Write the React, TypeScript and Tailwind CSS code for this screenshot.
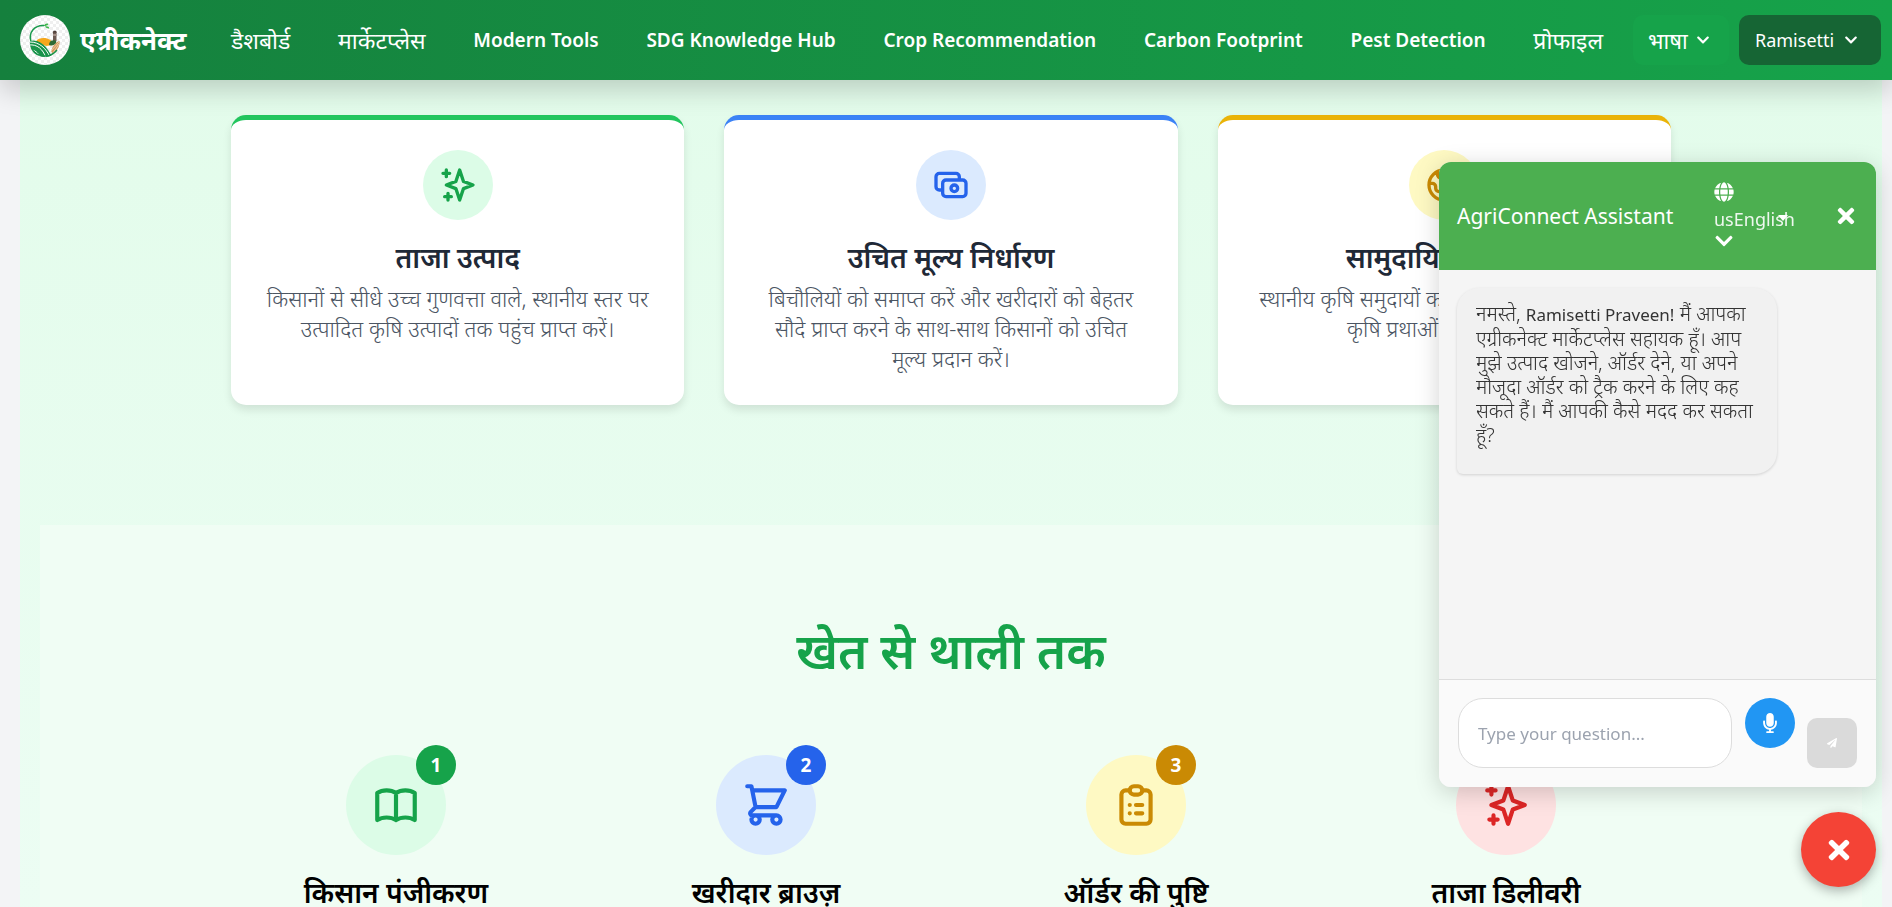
import type { ReactNode } from "react";
import {
  HiOutlineBookOpen,
  HiOutlineCash,
  HiOutlineClipboardList,
  HiOutlineGlobe,
  HiOutlineShoppingCart,
  HiOutlineSparkles,
} from "react-icons/hi";
import { FaChevronDown, FaGlobe, FaMicrophone, FaPaperPlane, FaTimes } from "react-icons/fa";

const navLinks = [
  { label: "डैशबोर्ड", hindi: true },
  { label: "मार्केटप्लेस", hindi: true },
  { label: "Modern Tools", hindi: false },
  { label: "SDG Knowledge Hub", hindi: false },
  { label: "Crop Recommendation", hindi: false },
  { label: "Carbon Footprint", hindi: false },
  { label: "Pest Detection", hindi: false },
  { label: "प्रोफाइल", hindi: true },
];

function Logo() {
  return (
    <svg viewBox="0 0 50 50" className="size-[50px] shrink-0" aria-hidden="true">
      <defs>
        <pattern id="checks" width="6" height="6" patternUnits="userSpaceOnUse">
          <rect width="6" height="6" fill="#ffffff" />
          <rect width="3" height="3" fill="#efefef" />
          <rect x="3" y="3" width="3" height="3" fill="#efefef" />
        </pattern>
        <clipPath id="field">
          <path d="M10 26C17 24 25 28 31 35C34 29 37 26 40 26C41 36 33 42 25 42C16 42 9 36 10 26Z" />
        </clipPath>
      </defs>
      <circle cx="25" cy="25" r="25" fill="url(#checks)" />
      <path d="M11 27C8 17 15 10 24 10.500" fill="none" stroke="#1a9a4c" strokeWidth="1.500" strokeLinecap="round" />
      <path d="M24 11C25 8.500 27 8 28.500 9C27.500 10.500 26 11 24 11ZM25 11.500C27.500 11 29 12 29.500 13.500C27.500 13.500 26 13 25 11.500Z" fill="#3cb54a" />
      <path d="M16 26.500C18 23 23 22.500 27 23.500C31 24.500 33 27 33 30L26 31Z" fill="#f6a71c" />
      <rect x="33" y="17" width="3.500" height="9" fill="#6d5a52" />
      <path d="M32.500 17.500C33 15 36.500 15 37 17.500Z" fill="#4b3a35" />
      <path d="M33 19h3.500v2H33z" fill="#a38f86" />
      <path d="M31 36C33 30 36 27 39.500 26C40 30 38 35 33 39Z" fill="#d99a5b" />
      <path d="M29 30C29 27 31 25 33 25.500C35 24.500 37 26 36 28C34 30.500 31 31 29 30Z" fill="#2f6b35" />
      <g clipPath="url(#field)">
        <path d="M9 25C18 24 26 29 32 42H9Z" fill="#18934a" />
        <path d="M9 30C17 29 23 34 26 43M9 35C14 34 19 38 20 43M10 27C19 27 26 33 30 42" fill="none" stroke="#ffffff" strokeWidth="1" />
        <path d="M33 38L39 29M31 36L39 27" stroke="#f5e3cc" strokeWidth="0.700" />
      </g>
      <path d="M12 34C16 41 29 45 37 35" fill="none" stroke="#18934a" strokeWidth="1.400" />
    </svg>
  );
}

function Navbar() {
  return (
    <header className="sticky top-0 z-20 flex h-20 items-center bg-linear-to-r from-[#15803d] to-[#16a34a] pr-[11px] pl-5 text-white shadow-[0_10px_25px_rgba(0,0,0,0.18)]">
      <a href="#home" className="flex w-[211px] shrink-0 items-center gap-[10px]">
        <Logo />
        <span className="text-[26px] leading-9 font-bold">एग्रीकनेक्ट</span>
      </a>
      <nav className="flex flex-1 items-center justify-between">
        {navLinks.map((link) => (
          <a
            key={link.label}
            href="#section"
            className={link.hindi ? "text-[23px] leading-7 whitespace-nowrap" : "text-[19px] leading-7 font-semibold whitespace-nowrap"}
          >
            {link.label}
          </a>
        ))}
      </nav>
      <button type="button" className="ml-[30px] flex h-[50px] w-24 shrink-0 items-center gap-2 rounded-[10px] bg-[#16a34a] pl-[15px] text-[22px]">
        भाषा
        <FaChevronDown className="size-[14px]" />
      </button>
      <button type="button" className="ml-[10px] flex h-[50px] w-[142px] shrink-0 items-center gap-[10px] rounded-[10px] bg-[#166534] pl-4 text-[18px]">
        Ramisetti
        <FaChevronDown className="size-[14px]" />
      </button>
    </header>
  );
}

const features = [
  {
    title: "ताजा उत्पाद",
    body: "किसानों से सीधे उच्च गुणवत्ता वाले, स्थानीय स्तर पर उत्पादित कृषि उत्पादों तक पहुंच प्राप्त करें।",
    border: "border-[#22c55e]",
    circle: "bg-[#dcfce7] text-[#16a34a]",
    icon: <HiOutlineSparkles className="size-10" />,
  },
  {
    title: "उचित मूल्य निर्धारण",
    body: "बिचौलियों को समाप्त करें और खरीदारों को बेहतर सौदे प्राप्त करने के साथ-साथ किसानों को उचित मूल्य प्रदान करें।",
    border: "border-[#3b82f6]",
    circle: "bg-[#dbeafe] text-[#2563eb]",
    icon: <HiOutlineCash className="size-10" />,
  },
  {
    title: "सामुदायिक समर्थन",
    body: "स्थानीय कृषि समुदायों का समर्थन करें और टिकाऊ कृषि प्रथाओं को बढ़ावा दें।",
    border: "border-[#eab308]",
    circle: "bg-[#fef9c3] text-[#ca8a04]",
    icon: <HiOutlineGlobe className="size-10" />,
  },
];

const steps: { title: string; circle: string; badge: string; icon: ReactNode }[] = [
  { title: "किसान पंजीकरण", circle: "bg-[#dcfce7] text-[#16a34a]", badge: "bg-[#16a34a]", icon: <HiOutlineBookOpen className="size-[50px]" /> },
  { title: "खरीदार ब्राउज़", circle: "bg-[#dbeafe] text-[#2563eb]", badge: "bg-[#2563eb]", icon: <HiOutlineShoppingCart className="size-[50px]" /> },
  { title: "ऑर्डर की पुष्टि", circle: "bg-[#fef9c3] text-[#ca8a04]", badge: "bg-[#ca8a04]", icon: <HiOutlineClipboardList className="size-[50px]" /> },
  { title: "ताजा डिलीवरी", circle: "bg-[#fee2e2] text-[#dc2626]", badge: "bg-[#dc2626]", icon: <HiOutlineSparkles className="size-[50px]" /> },
];

function Features() {
  return (
    <section className="pt-[35px] pb-[120px]">
      <div className="mx-auto grid max-w-[1440px] grid-cols-3 gap-10">
        {features.map((f) => (
          <article key={f.title} className={`flex flex-col items-center rounded-[15px] border-t-[5px] bg-white px-8 pt-[30px] pb-8 text-center shadow-[0_5px_8px_rgba(0,0,0,0.1)] ${f.border}`}>
            <div className={`mb-5 flex size-[70px] items-center justify-center rounded-full ${f.circle}`}>{f.icon}</div>
            <h3 className="mb-2 text-[28px] leading-[35px] font-semibold text-[#1f2937]">{f.title}</h3>
            <p className="text-[22px] leading-[30px] font-light text-[#4b5563]">{f.body}</p>
          </article>
        ))}
      </div>
    </section>
  );
}

function Steps() {
  return (
    <section className="mx-5 bg-[#f0fdf4] pt-[100px] pb-20">
      <h2 className="mb-20 text-center text-[49px] leading-[50px] font-semibold text-[#16a34a]">खेत से थाली तक</h2>
      <ol className="mx-auto grid max-w-[1440px] grid-cols-4 gap-10">
        {steps.map((s, i) => (
          <li key={s.title} className="flex flex-col items-center">
            <div className={`relative mb-5 flex size-[100px] items-center justify-center rounded-full ${s.circle}`}>
              {s.icon}
              <span className={`absolute -top-[10px] -right-[10px] flex size-10 items-center justify-center rounded-full text-[19px] font-bold text-white ${s.badge}`}>
                {i + 1}
              </span>
            </div>
            <h3 className="text-[28px] leading-[35px] font-semibold text-black">{s.title}</h3>
          </li>
        ))}
      </ol>
    </section>
  );
}

function ChatWidget() {
  return (
    <>
      <aside
        aria-label="AgriConnect Assistant"
        className="fixed right-4 bottom-[120px] z-30 flex h-[625px] w-[437px] flex-col overflow-hidden rounded-[12px] bg-[#f5f5f5] shadow-[0_5px_25px_rgba(0,0,0,0.18)]"
      >
        <div className="flex h-[108px] shrink-0 items-center bg-[#4caf50] px-[18px] text-white">
          <h2 className="flex-1 text-[21px] leading-7 whitespace-nowrap">AgriConnect Assistant</h2>
          <div className="relative mr-9 flex w-[84px] flex-col">
            <FaGlobe className="mb-[5px] size-5" />
            <select aria-label="Language" defaultValue="en" className="w-full appearance-none bg-transparent text-[18px] leading-6 text-white/90 outline-none">
              <option value="en">usEnglish</option>
            </select>
            <FaChevronDown className="size-5" />
            <svg viewBox="0 0 10 6" className="absolute top-[33px] left-16 h-[6px] w-[10px]" aria-hidden="true">
              <path d="M0 0H10L5 6Z" fill="currentColor" />
            </svg>
          </div>
          <button type="button" aria-label="Close chat">
            <FaTimes className="size-6" />
          </button>
        </div>
        <div className="flex-1 pt-[18px] pl-[18px]">
          <p className="w-80 rounded-[22px] rounded-bl-[6px] bg-[#f1f1f1] pt-[14px] pr-[15px] pb-[27px] pl-[19px] text-[20px] leading-6 font-light text-[#333333] shadow-[0_1px_3px_rgba(0,0,0,0.15)]">
            नमस्ते, <span className="text-[17px] font-normal">Ramisetti Praveen!</span> मैं आपका एग्रीकनेक्ट मार्केटप्लेस सहायक हूँ। आप मुझे उत्पाद खोजने, ऑर्डर देने, या अपने मौजूदा ऑर्डर को ट्रैक करने के लिए कह सकते हैं। मैं आपकी कैसे मदद कर सकता हूँ?
          </p>
        </div>
        <form className="flex shrink-0 border-t border-[#dddddd] bg-[#fafafa] px-[19px] pt-[18px] pb-[19px]" onSubmit={(e) => e.preventDefault()}>
          <input
            type="text"
            aria-label="Your question"
            placeholder="Type your question..."
            className="h-[70px] min-w-0 flex-1 rounded-[25px] border border-[#dddddd] bg-white px-[19px] text-[17px] outline-none placeholder:text-[#9ca3af]"
          />
          <button type="button" aria-label="Speak" className="ml-[13px] flex size-[50px] shrink-0 items-center justify-center rounded-full bg-[#2196f3] text-white">
            <FaMicrophone className="size-5" />
          </button>
          <button type="submit" aria-label="Send" className="ml-3 flex size-[50px] shrink-0 items-center justify-center self-end rounded-[10px] bg-[#dadada] text-white">
            <FaPaperPlane className="size-[10px]" />
          </button>
        </form>
      </aside>
      <button
        type="button"
        aria-label="Toggle assistant"
        className="fixed right-4 bottom-5 z-30 flex size-[75px] items-center justify-center rounded-full bg-[#f44336] text-white shadow-[0_4px_12px_rgba(0,0,0,0.3)]"
      >
        <FaTimes className="size-[30px]" />
      </button>
    </>
  );
}

export default function App() {
  return (
    <div className="min-h-screen bg-[#f3f4f6] font-['Noto_Sans','Noto_Sans_Devanagari',sans-serif]">
      <Navbar />
      <main className="mr-[10px] ml-5 bg-linear-to-b from-[#e3fceb] to-[#edfdf4]">
        <Features />
        <Steps />
      </main>
      <ChatWidget />
    </div>
  );
}
